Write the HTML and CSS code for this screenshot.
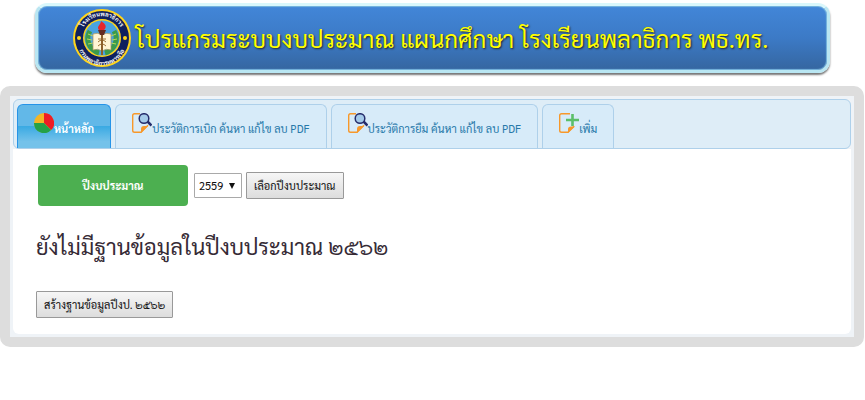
FILE: index.html
```html
<!DOCTYPE html>
<html lang="th">
<head>
<meta charset="utf-8">
<title>โปรแกรมระบบงบประมาณ</title>
<link rel="stylesheet" href="styles.css">
</head>
<body>
<header class="banner">
  <svg class="seal" viewBox="0 0 60 60" aria-hidden="true">
    <defs>
      <path id="arc-top" d="M10.500 37A21 21 0 1 1 49.500 37"/>
      <path id="arc-bottom" d="M5.500 33A24.500 24.500 0 0 0 54.500 33"/>
    </defs>
    <circle cx="30" cy="30" r="29" fill="#ffd51c"/>
    <circle cx="30" cy="30" r="27" fill="#10205e"/>
    <circle cx="30" cy="30" r="19" fill="#ffd51c"/>
    <circle cx="30" cy="30" r="17.500" fill="#4aa3df"/>
    <circle cx="7" cy="30" r="2" fill="#ffd51c"/>
    <circle cx="53" cy="30" r="2" fill="#ffd51c"/>
    <path d="M18 23C13 31 17 42 27 45M42 23C47 31 43 42 33 45" fill="none" stroke="#3c9b4a" stroke-width="5"/>
    <path d="M16 26l5 2M15 31l5 1M16 36l5-1M44 26l-5 2M45 31l-5 1M44 36l-5-1" stroke="#b8d85a" stroke-width="1"/>
    <path d="M21 26q5-2 9 1q4-3 9-1v16q-5-2-9 1q-4-3-9-1z" fill="#fff5d5" stroke="#a9945a" stroke-width=".7"/>
    <path d="M26 31h8M26 34q4-4 8 0M26 38q4-4 8 0" fill="none" stroke="#9c7338" stroke-width="1"/>
    <path d="M30 24v23" stroke="#8c602b" stroke-width="2"/>
    <path d="M26 22h8l-2 5h-4z" fill="#642b20"/>
    <path d="M27 22c-3-4 2-5 2-9c5 3 6 6 3 9z" fill="#e9262b"/>
    <text class="seal-text"><textPath href="#arc-top" startOffset="50%">โรงเรียนพลาธิการ</textPath></text>
    <text class="seal-text"><textPath href="#arc-bottom" startOffset="50%">กรมพลาธิการทหารเรือ</textPath></text>
  </svg>
  <h1>โปรแกรมระบบงบประมาณ แผนกศึกษา โรงเรียนพลาธิการ พธ.ทร.</h1>
</header>
<main class="frame">
  <nav class="tabs">
    <a class="tab active" href="#home">
      <svg class="icon" viewBox="0 0 20 20" aria-hidden="true"><circle cx="10" cy="10" r="10" fill="#f3b526"/><path d="M10 10V0a10 10 0 0 1 7.100 17.100z" fill="#ee1c25"/><path d="M10 10l7.100 7.100A10 10 0 0 1 0 10z" fill="#24a148"/></svg><span>หน้าหลัก</span></a>
    <a class="tab" href="#withdraw">
      <svg class="icon" viewBox="0 0 20 20" aria-hidden="true"><path d="M8 .7H2.500Q.7.700.7 2.500v15q0 1.800 1.800 1.800H9l7-7" fill="none" stroke="#f7982a" stroke-width="1.400"/><path d="M9 20v-4q0-3 3-3h4z" fill="#f7982a"/><path d="M15 8l4.500 4.500" stroke="#262d6c" stroke-width="2.500"/><circle cx="12" cy="5.500" r="4.800" fill="#a5cbea" stroke="#262d6c" stroke-width="1.500"/></svg><span>ประวัติการเบิก ค้นหา แก้ไข ลบ PDF</span></a>
    <a class="tab" href="#borrow">
      <svg class="icon" viewBox="0 0 20 20" aria-hidden="true"><path d="M8 .7H2.500Q.7.700.7 2.500v15q0 1.800 1.800 1.800H9l7-7" fill="none" stroke="#f7982a" stroke-width="1.400"/><path d="M9 20v-4q0-3 3-3h4z" fill="#f7982a"/><path d="M15 8l4.500 4.500" stroke="#262d6c" stroke-width="2.500"/><circle cx="12" cy="5.500" r="4.800" fill="#a5cbea" stroke="#262d6c" stroke-width="1.500"/></svg><span>ประวัติการยืม ค้นหา แก้ไข ลบ PDF</span></a>
    <a class="tab" href="#add">
      <svg class="icon" viewBox="0 0 20 20" aria-hidden="true"><path d="M11 .7H2.500Q.7.700.7 2.500v15q0 1.800 1.800 1.800H9l6-6" fill="none" stroke="#f7982a" stroke-width="1.400"/><path d="M9 20v-4q0-2.500 3-2.500h4z" fill="#f7982a"/><path d="M13.500 1v12M7 7h13" stroke="#5bbf69" stroke-width="2.600"/></svg><span>เพิ่ม</span></a>
  </nav>
  <section class="panel">
    <form class="year-form">
      <label class="year-label" for="year">ปีงบประมาณ</label>
      <span class="select-box"><select id="year"><option>2559</option></select></span>
      <button type="button">เลือกปีงบประมาณ</button>
    </form>
    <h2>ยังไม่มีฐานข้อมูลในปีงบประมาณ ๒๕๖๒</h2>
    <button type="button">สร้างฐานข้อมูลปีงป. ๒๕๖๒</button>
  </section>
</main>
</body>
</html>
```
FILE: styles.css
```css
* { box-sizing: border-box; }
body {
  margin: 0;
  padding-top: 3px;
  background: #fff;
  color: #362b36;
  font-family: "Sarabun", "TH Sarabun New", "Open Sans", "Noto Sans Thai", sans-serif;
  font-size: 11px;
}
.banner {
  display: flex;
  align-items: center;
  gap: 4px;
  width: 92%;
  min-height: 70px;
  margin: 0 auto 13px;
  padding: 0 34px;
  border: 3px solid #b9e6f2;
  border-top-color: #d9f7fb;
  border-radius: 12px;
  background: linear-gradient(#4286d8, #3c7ac6 50%, #3566a0);
  box-shadow: 0 2px 2px #777, inset 0 0 1px 1px #78b7df;
}
.seal { width: 60px; height: 60px; flex: none; }
.seal-text { fill: #fff; font-size: 6px; font-weight: bold; text-anchor: middle; }
h1 {
  margin: 0;
  color: #ff0;
  font-size: 24px;
  font-weight: normal;
  line-height: 40px;
  text-shadow: 1px 1px 2px #222;
}
.frame {
  margin-right: 1px;
  padding: 3px;
  border: 10px solid #ddd;
  border-radius: 10px;
  background: #eff3f7;
}
.tabs {
  display: flex;
  gap: 4px;
  padding: 4px 3px 0;
  border: 1px solid #aed0ea;
  border-radius: 6px;
  background: #deedf7;
}
.tab {
  display: flex;
  align-items: flex-start;
  height: 44px;
  padding: 8px 16px 0;
  border: 1px solid #aed0ea;
  border-bottom: 0;
  border-radius: 6px 6px 0 0;
  background: #d7ebf9;
  color: #2779aa;
  line-height: 16px;
  text-decoration: none;
  white-space: nowrap;
}
.tab span { padding-top: 8px; }
.active {
  border-color: #2694e8;
  background: linear-gradient(#62b8e8 0 50%, #3baae3 50%, #74c2ea 85%);
  color: #fff;
  font-weight: bold;
}
.icon { width: 20px; height: 20px; flex: none; }
.panel {
  padding: 16px 23px;
  border-radius: 0 0 6px 6px;
  background: #fff;
}
.year-form { display: flex; align-items: center; gap: 4px; }
.year-label {
  width: 150px;
  margin: 0 2px;
  border-radius: 4px;
  background: #4caf50;
  color: #fff;
  font-weight: bold;
  line-height: 41px;
  text-align: center;
}
button, select { font-family: inherit; font-size: 11px; color: #111; }
button {
  height: 27px;
  padding: 0 7px;
  border: 1px solid #999;
  border-radius: 1px;
  background: linear-gradient(#f6f6f6, #ddd);
}
.select-box { position: relative; }
.select-box::after {
  position: absolute;
  top: 10px;
  right: 7px;
  border: solid transparent;
  border-width: 6px 3px 0;
  border-top-color: #111;
  content: "";
  pointer-events: none;
}
select {
  display: block;
  width: 48px;
  height: 25px;
  padding: 0 4px;
  appearance: none;
  border: 1px solid #a9a9a9;
  border-radius: 1px;
  background: #fff;
}
h2 {
  margin: 20px 0 24px;
  font-size: 22px;
  font-weight: normal;
  line-height: 41px;
}
```
